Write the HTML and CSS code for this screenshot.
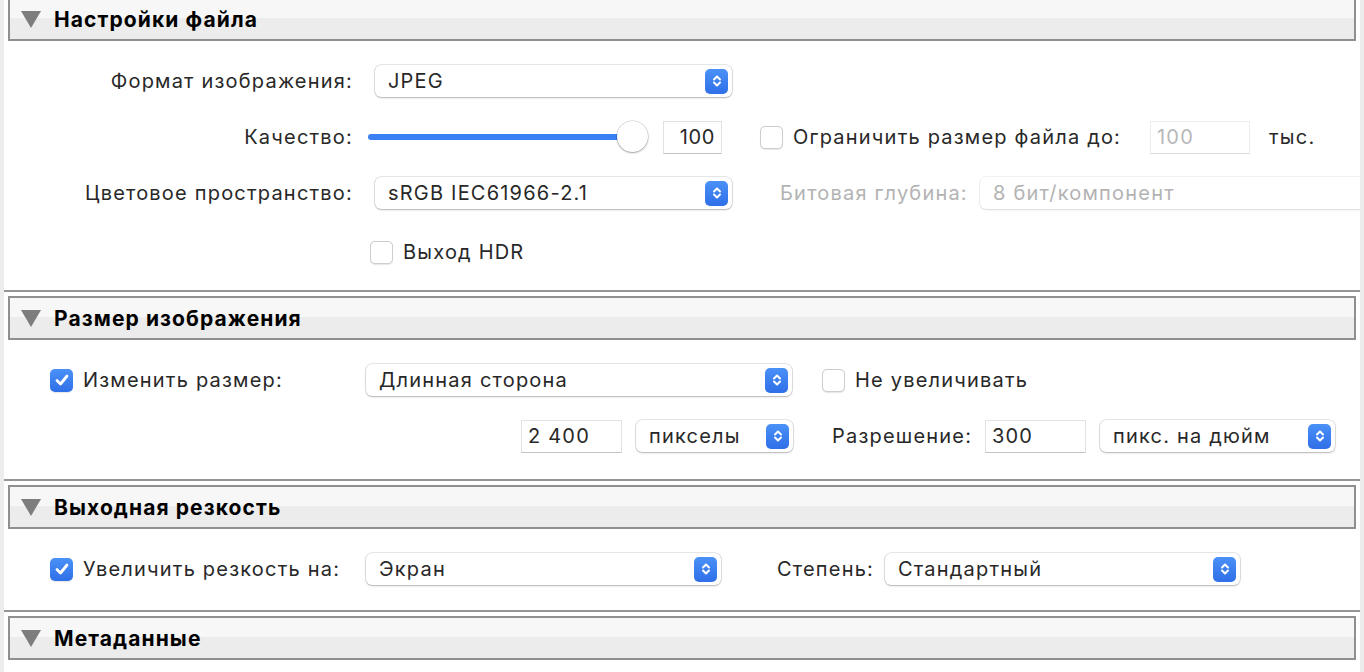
FILE: index.html
```html
<!DOCTYPE html>
<html lang="ru">
<head>
    <meta charset="UTF-8">
    <title>Экспорт</title>
    <link rel="stylesheet" href="styles.css">
</head>
<body>
<div class="window">

    <section class="panel">
        <div class="panel-head"><span class="disclosure"></span>Настройки файла</div>
        <div class="panel-body">
            <div class="row">
                <span class="row-label">Формат изображения:</span>
                <div class="popup fmt-popup">
                    <span>JPEG</span>
                    <span class="stepper"><svg width="10" height="16" viewBox="0 0 10 16"><path d="M2 6.5 5 3.5 8 6.5M2 9.5 5 12.5 8 9.5"/></svg></span>
                </div>
            </div>
            <div class="row">
                <span class="row-label">Качество:</span>
                <div class="slider">
                    <div class="slider-track"></div>
                    <div class="slider-knob"></div>
                </div>
                <div class="field quality-field">100</div>
                <div class="check-group limit-group">
                    <span class="checkbox"></span>
                    <span>Ограничить размер файла до:</span>
                </div>
                <div class="field limit-field disabled">100</div>
                <span class="unit">тыс.</span>
            </div>
            <div class="row">
                <span class="row-label">Цветовое пространство:</span>
                <div class="popup fmt-popup">
                    <span>sRGB IEC61966-2.1</span>
                    <span class="stepper"><svg width="10" height="16" viewBox="0 0 10 16"><path d="M2 6.5 5 3.5 8 6.5M2 9.5 5 12.5 8 9.5"/></svg></span>
                </div>
                <span class="depth-label disabled-text">Битовая глубина:</span>
                <div class="popup depth-popup disabled-text">
                    <span>8 бит/компонент</span>
                    <span class="stepper plain"><svg width="10" height="16" viewBox="0 0 10 16"><path d="M2 6.5 5 3.5 8 6.5M2 9.5 5 12.5 8 9.5"/></svg></span>
                </div>
            </div>
            <div class="row hdr-row">
                <div class="check-group">
                    <span class="checkbox"></span>
                    <span>Выход HDR</span>
                </div>
            </div>
        </div>
    </section>

    <section class="panel">
        <div class="panel-head"><span class="disclosure"></span>Размер изображения</div>
        <div class="panel-body size-body">
            <div class="row">
                <div class="check-group lead-cell">
                    <span class="checkbox checked"><svg width="14" height="12" viewBox="0 0 14 12"><path d="M2 6.5 5.5 10 12 2"/></svg></span>
                    <span>Изменить размер:</span>
                </div>
                <div class="popup side-popup">
                    <span>Длинная сторона</span>
                    <span class="stepper"><svg width="10" height="16" viewBox="0 0 10 16"><path d="M2 6.5 5 3.5 8 6.5M2 9.5 5 12.5 8 9.5"/></svg></span>
                </div>
                <div class="check-group enlarge-group">
                    <span class="checkbox"></span>
                    <span>Не увеличивать</span>
                </div>
            </div>
            <div class="row">
                <div class="field size-field">2 400</div>
                <div class="popup unit-popup">
                    <span>пикселы</span>
                    <span class="stepper"><svg width="10" height="16" viewBox="0 0 10 16"><path d="M2 6.5 5 3.5 8 6.5M2 9.5 5 12.5 8 9.5"/></svg></span>
                </div>
                <span class="res-label">Разрешение:</span>
                <div class="field res-field">300</div>
                <div class="popup ppi-popup">
                    <span>пикс. на дюйм</span>
                    <span class="stepper"><svg width="10" height="16" viewBox="0 0 10 16"><path d="M2 6.5 5 3.5 8 6.5M2 9.5 5 12.5 8 9.5"/></svg></span>
                </div>
            </div>
        </div>
    </section>

    <section class="panel">
        <div class="panel-head"><span class="disclosure"></span>Выходная резкость</div>
        <div class="panel-body sharp-body">
            <div class="row">
                <div class="check-group lead-cell">
                    <span class="checkbox checked"><svg width="14" height="12" viewBox="0 0 14 12"><path d="M2 6.5 5.5 10 12 2"/></svg></span>
                    <span>Увеличить резкость на:</span>
                </div>
                <div class="popup sharp-popup">
                    <span>Экран</span>
                    <span class="stepper"><svg width="10" height="16" viewBox="0 0 10 16"><path d="M2 6.5 5 3.5 8 6.5M2 9.5 5 12.5 8 9.5"/></svg></span>
                </div>
                <span class="amount-label">Степень:</span>
                <div class="popup sharp-popup">
                    <span>Стандартный</span>
                    <span class="stepper"><svg width="10" height="16" viewBox="0 0 10 16"><path d="M2 6.5 5 3.5 8 6.5M2 9.5 5 12.5 8 9.5"/></svg></span>
                </div>
            </div>
        </div>
    </section>

    <section class="panel">
        <div class="panel-head"><span class="disclosure"></span>Метаданные</div>
        <div class="panel-body"></div>
    </section>

</div>
</body>
</html>
```

FILE: styles.css
```css
body {
    margin: 0;
    padding: 0 4px;
    height: 672px;
    overflow: hidden;
    background-color: #ececec;
    font-family: 'Inter', 'Noto Sans', sans-serif;
    font-size: 20px;
    letter-spacing: 1.2px;
    color: #282828;
}
.window {
    margin-top: -9px;
    min-height: 700px;
    background-color: #ffffff;
    overflow: hidden;
}
.panel {
    border-top: 2px solid #959595;
    padding-top: 4px;
}
.panel-head {
    margin: 0 4px;
    height: 40px;
    border: 2px solid #8f8f8f;
    background: linear-gradient(#f7f7f7 0, #f7f7f7 48%, #ececec 48%, #ececec 100%);
    display: flex;
    align-items: center;
    padding-left: 11px;
    font-size: 21px;
    letter-spacing: 1.1px;
    font-weight: 700;
    color: #000;
}
.disclosure {
    width: 0;
    height: 0;
    border-left: 10.5px solid transparent;
    border-right: 10.5px solid transparent;
    border-top: 17px solid #7d7d7d;
    margin-right: 13px;
}
.panel-body {
    padding: 12px 0 10px;
}
.row {
    height: 56px;
    display: flex;
    align-items: center;
    white-space: nowrap;
}
.row-label {
    width: 349px;
    text-align: right;
    flex-shrink: 0;
}
.hdr-row {
    margin-top: 3px;
    padding-left: 366px;
}

/* popup buttons */
.popup {
    height: 32px;
    box-sizing: border-box;
    background-color: #fff;
    border-radius: 6px;
    box-shadow: 0 0 0 0.5px rgba(0, 0, 0, 0.18), 0 1px 2px rgba(0, 0, 0, 0.22);
    display: flex;
    align-items: center;
    justify-content: space-between;
    padding: 0 4px 0 13px;
    flex-shrink: 0;
}
.stepper {
    width: 23px;
    height: 25px;
    border-radius: 5px;
    background: linear-gradient(#4a91f7, #2f6fe8);
    display: flex;
    align-items: center;
    justify-content: center;
}
.stepper svg path {
    fill: none;
    stroke: #fff;
    stroke-width: 2;
    stroke-linecap: round;
    stroke-linejoin: round;
}
.stepper.plain {
    background: none;
}
.stepper.plain svg path {
    stroke: #b9b9b9;
}
.fmt-popup {
    width: 357px;
    margin-left: 22px;
}
.depth-popup {
    width: 400px;
    margin-left: 14px;
    box-shadow: 0 0 0 0.5px rgba(0, 0, 0, 0.1), 0 1px 2px rgba(0, 0, 0, 0.1);
}
.side-popup {
    width: 426px;
}
.unit-popup {
    width: 157px;
    margin-left: 14px;
}
.ppi-popup {
    width: 235px;
    margin-left: 14px;
}
.sharp-popup {
    width: 355px;
}

/* text fields */
.field {
    height: 33px;
    box-sizing: border-box;
    border: 1px solid #e2e2e2;
    border-bottom-color: #c4c4c4;
    background-color: #fff;
    display: flex;
    align-items: center;
    padding: 0 6px;
    flex-shrink: 0;
}
.quality-field {
    width: 59px;
    margin-left: 15px;
    justify-content: flex-end;
    letter-spacing: 0.6px;
}
.limit-field {
    width: 100px;
}
.field.disabled {
    color: #b8b8b8;
    border-color: #ececec;
    border-bottom-color: #dcdcdc;
}
.size-field {
    width: 101px;
    margin-left: 517px;
}
.res-field {
    width: 101px;
    margin-left: 12px;
}
.unit {
    margin-left: 19px;
}

/* slider */
.slider {
    position: relative;
    width: 280px;
    height: 32px;
    margin-left: 15px;
    flex-shrink: 0;
}
.slider-track {
    position: absolute;
    left: 0;
    top: 13px;
    width: 262px;
    height: 6px;
    border-radius: 3px;
    background-color: #3b80f2;
}
.slider-knob {
    position: absolute;
    left: 249px;
    top: 0;
    width: 31px;
    height: 31px;
    border-radius: 50%;
    background-color: #fff;
    box-shadow: 0 0 0 0.5px rgba(0, 0, 0, 0.2), 0 1px 2px rgba(0, 0, 0, 0.3);
}

/* checkboxes */
.check-group {
    display: flex;
    align-items: center;
    flex-shrink: 0;
}
.checkbox {
    width: 23px;
    height: 23px;
    box-sizing: border-box;
    border-radius: 5px;
    border: 1px solid #cdcdcd;
    background-color: #fff;
    box-shadow: 0 0.5px 1px rgba(0, 0, 0, 0.1);
    margin-right: 10px;
    display: flex;
    align-items: center;
    justify-content: center;
}
.checkbox.checked {
    border: none;
    background: linear-gradient(#4a91f7, #2f6fe8);
}
.checkbox.checked svg path {
    fill: none;
    stroke: #fff;
    stroke-width: 2.8;
    stroke-linecap: round;
    stroke-linejoin: round;
}
.limit-group {
    width: 390px;
    margin-left: 38px;
}
.lead-cell {
    width: 316px;
    margin-left: 46px;
}
.enlarge-group {
    margin-left: 30px;
}

.disabled-text {
    color: #b3b3b3;
}
.depth-label {
    width: 186px;
    margin-left: 48px;
    flex-shrink: 0;
}
.res-label {
    width: 141px;
    margin-left: 39px;
    flex-shrink: 0;
}
.amount-label {
    width: 108px;
    margin-left: 56px;
    flex-shrink: 0;
}

.size-body {
    padding-bottom: 15px;
}
.sharp-body {
    padding-bottom: 13px;
}
```
